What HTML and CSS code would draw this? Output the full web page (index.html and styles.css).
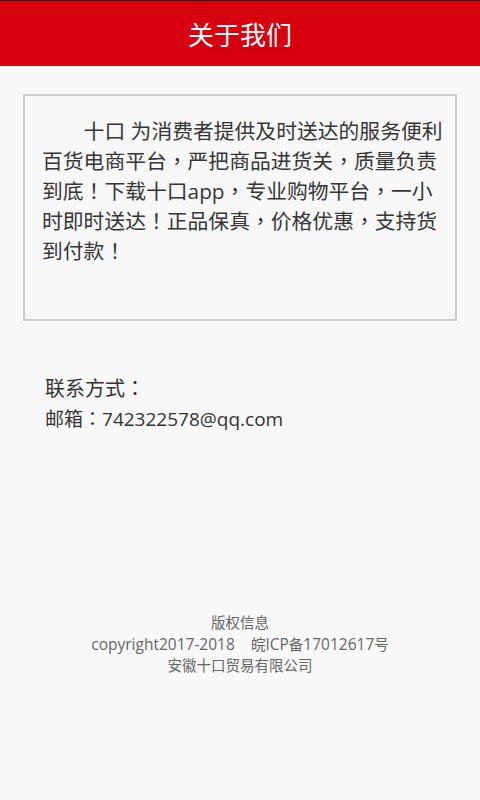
FILE: index.html
```html
<!DOCTYPE html>
<html lang="zh-CN">

    <head>
        <meta charset="UTF-8">
        <meta name="viewport" content="width=device-width, initial-scale=1.0">
        <title>关于我们</title>
        <link rel="stylesheet" href="styles.css">
    </head>

    <body>
        <header class="topbar">
            <h1 class="topbar-title">关于我们</h1>
        </header>

        <div class="intro-box">
            <p class="intro-text">十口 为消费者提供及时送达的服务便利百货电商平台<span class="punc" lang="zh-TW">，</span>严把商品进货关<span class="punc" lang="zh-TW">，</span>质量负责到底<span class="punc" lang="zh-TW">！</span>下载十口app<span class="punc" lang="zh-TW">，</span>专业购物平台<span class="punc" lang="zh-TW">，</span>一小时即时送达<span class="punc" lang="zh-TW">！</span>正品保真<span class="punc" lang="zh-TW">，</span>价格优惠<span class="punc" lang="zh-TW">，</span>支持货到付款<span class="punc" lang="zh-TW">！</span></p>
        </div>

        <div class="contact">
            <div class="contact-title">联系方式<span class="punc" lang="zh-TW">：</span></div>
            <div class="contact-mail">邮箱<span class="punc" lang="zh-TW">：</span>742322578@qq.com</div>
        </div>

        <footer class="footer">
            <div>版权信息</div>
            <div><span class="latin">copyright2017-2018&nbsp;&nbsp;&nbsp;&nbsp;</span>皖<span class="latin">ICP</span>备<span class="latin">17012617</span>号</div>
            <div>安徽十口贸易有限公司</div>
        </footer>
    </body>

</html>
```

FILE: styles.css
```css
html,
body {
    margin: 0;
    padding: 0;
}

body {
    width: 480px;
    min-height: 800px;
    background-color: #f8f8f8;
    font-family: "Open Sans", "Noto Sans CJK SC", sans-serif;
    color: #333;
}

/* centred full-width punctuation, as on the device */
.punc {
    font-family: "Noto Sans CJK TC", sans-serif;
    line-height: 1;
}

.topbar {
    height: 65px;
    background-color: #d7000f;
    border-top: 1px solid #5a0006;
    display: flex;
    align-items: center;
    justify-content: center;
}

.topbar-title {
    margin: 0;
    font-size: 26px;
    font-weight: normal;
    color: #fff;
}

.intro-box {
    margin: 28px 23px 0 23px;
    border: 2px solid #cbcbcb;
    padding: 20px 12px 53px 17px;
}

.intro-text {
    margin: 0;
    width: 402px;
    font-size: 20.8px;
    line-height: 30px;
    text-indent: 2em;
    color: #363636;
}

.contact {
    margin-top: 53px;
    padding-left: 45px;
}

.contact-title {
    font-size: 20px;
    line-height: 30px;
    color: #333;
}

.contact-mail {
    font-size: 19px;
    line-height: 30px;
    color: #333;
}

.footer {
    margin-top: 178px;
    text-align: center;
    font-size: 14.5px;
    line-height: 21.5px;
    color: #666;
}

.latin {
    font-size: 15.5px;
    line-height: 1;
}
```
